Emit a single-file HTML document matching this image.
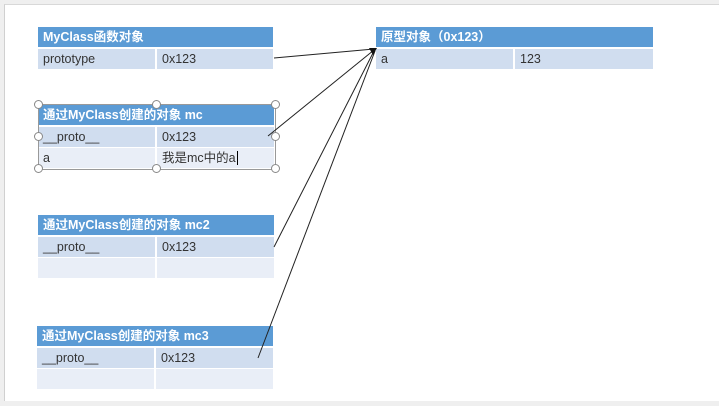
<!DOCTYPE html>
<html><head><meta charset="utf-8"><style>
body{margin:0;width:719px;height:406px;background:#efefef;position:relative;overflow:hidden;font-family:"Liberation Sans","Noto Sans CJK SC",sans-serif}
.page{position:absolute;left:4px;top:4px;width:715px;height:396px;background:#fff;border-left:1px solid #d0d0d0;border-top:1px solid #d8d8d8}
.t{position:absolute;font-size:12.5px;color:#333}
.h{background:#5b9bd5;color:#fff;font-weight:bold;height:20px;line-height:20px;padding-left:5px;margin-bottom:2px;font-size:12.5px}
.r{display:flex;height:20px;line-height:20px;margin-bottom:1px}
.r div{padding-left:5px;box-sizing:border-box}
.r div:first-child{border-right:2px solid #fff}
.a{background:#d0ddef}.b{background:#e9eef7}
.hd{position:absolute;width:7px;height:7px;border:1px solid #888;border-radius:50%;background:#fff}
</style></head><body>
<div class="page"></div>
<div class="t" style="left:38px;top:27px;width:235px">
<div class="h">MyClass函数对象</div>
<div class="r a"><div style="width:119px">prototype</div><div>0x123</div></div></div>
<div class="t" style="left:376px;top:27px;width:277px">
<div class="h">原型对象（0x123）</div>
<div class="r a"><div style="width:139px">a</div><div>123</div></div></div>
<div class="t" style="left:38px;top:105px;width:236px">
<div class="h">通过MyClass创建的对象 mc</div>
<div class="r a"><div style="width:119px">__proto__</div><div>0x123</div></div>
<div class="r b"><div style="width:119px">a</div><div>我是mc中的a<span style="border-left:1px solid #000;margin-left:1px"></span></div></div></div>
<div style="position:absolute;left:38px;top:104px;width:236px;height:64px;border:1px solid #999"></div>
<div class="hd" style="left:34px;top:100px"></div><div class="hd" style="left:152px;top:100px"></div><div class="hd" style="left:271px;top:100px"></div>
<div class="hd" style="left:34px;top:132px"></div><div class="hd" style="left:271px;top:132px"></div>
<div class="hd" style="left:34px;top:164px"></div><div class="hd" style="left:152px;top:164px"></div><div class="hd" style="left:271px;top:164px"></div>
<div class="t" style="left:38px;top:215px;width:236px">
<div class="h">通过MyClass创建的对象 mc2</div>
<div class="r a"><div style="width:119px">__proto__</div><div>0x123</div></div>
<div class="r b"><div style="width:119px"></div><div></div></div></div>
<div class="t" style="left:37px;top:326px;width:236px">
<div class="h">通过MyClass创建的对象 mc3</div>
<div class="r a"><div style="width:119px">__proto__</div><div>0x123</div></div>
<div class="r b"><div style="width:119px"></div><div></div></div></div>
<svg style="position:absolute;left:0;top:0" width="719" height="406">
<g stroke="#222" stroke-width="1" fill="none">
<line x1="274" y1="58" x2="374" y2="49"/>
<line x1="268" y1="136" x2="374" y2="50"/>
<line x1="274" y1="247" x2="374" y2="51"/>
<line x1="258" y1="358" x2="375" y2="51"/>
</g>
<polygon points="377,48 369,48 373,55" fill="#111"/>
</svg>
</body></html>
